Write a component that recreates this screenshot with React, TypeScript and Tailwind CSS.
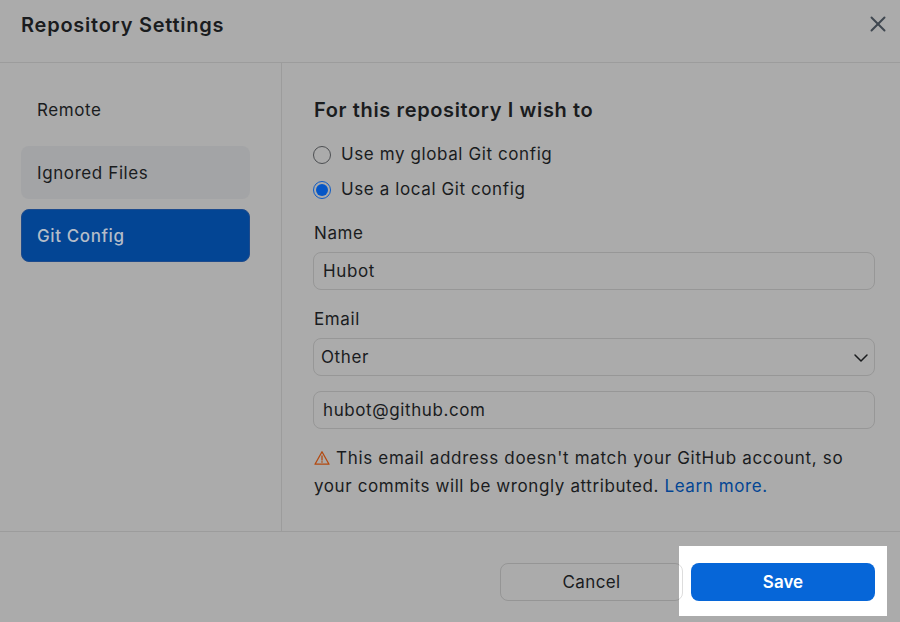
import { ChevronDown, X } from "lucide-react";

const font = "font-['Inter','Liberation_Sans',sans-serif]";

const App = () => {
  return (
    <div className={`${font} w-[900px] h-[622px] overflow-hidden bg-[#ababab] text-[#1a1c1e] flex flex-col`}>
      <header className="h-[63px] shrink-0 border-b border-[#9c9c9c] pl-[21px] pr-[9px] flex items-center justify-between">
        <h1 className="text-[20px] font-semibold leading-none tracking-[0.76px] -mt-[13px]">Repository Settings</h1>
        <button className="-mt-[15px] text-[#3f4750]">
          <X size={26} strokeWidth={1.8} />
        </button>
      </header>

      <div className="flex flex-1 min-h-0">
        <nav className="w-[282px] shrink-0 border-r border-[#9c9c9c] pl-[21px] pr-[31px] pt-[20px] flex flex-col gap-[10px] text-[17px] tracking-[0.6px]">
          <div className="h-[53px] pl-[16px] pt-[3px] flex items-center">Remote</div>
          <div className="h-[53px] pl-[16px] pt-[3px] flex items-center rounded-[8px] bg-[#a3a4a6]">Ignored Files</div>
          <div className="h-[53px] pl-[15px] pt-[2px] flex items-center rounded-[8px] bg-[#034594] border border-[#1e4b8c] text-[#b4bcc8] font-medium">Git Config</div>
        </nav>

        <main className="flex-1 pl-[31px] pr-[25px] pt-[34px] text-[17px] tracking-[0.6px]">
          <h2 className="pl-[1px] text-[20px] font-semibold leading-[26px] tracking-[0.63px]">For this repository I wish to</h2>

          <div className="mt-[20px] flex items-center gap-[10px] h-[24px]">
            <span className="w-[18px] h-[18px] rounded-full border border-[#4d4f52]" />
            <span>Use my global Git config</span>
          </div>
          <div className="mt-[11px] flex items-center gap-[10px] h-[24px]">
            <span className="w-[18px] h-[18px] rounded-full border-[1.5px] border-[#0f5bc4] flex items-center justify-center">
              <span className="w-[12px] h-[12px] rounded-full bg-[#0556c6]" />
            </span>
            <span>Use a local Git config</span>
          </div>

          <div className="mt-[19px] pl-[1px] leading-[24px]">Name</div>
          <div className="mt-[7px] h-[38px] rounded-[8px] border border-[#979797] pl-[9px] pt-[2px] flex items-center">Hubot</div>

          <div className="mt-[17px] pl-[1px] leading-[24px]">Email</div>
          <div className="mt-[7px] h-[38px] rounded-[8px] border border-[#979797] pl-[7px] pr-[1px] pt-[1px] flex items-center justify-between">
            <span>Other</span>
            <ChevronDown size={24} strokeWidth={1.5} className="text-[#1a1c1e]" />
          </div>
          <div className="mt-[15px] h-[38px] rounded-[8px] border border-[#979797] pl-[9px] pt-[2px] flex items-center">hubot@github.com</div>

          <p className="mt-[15px] pl-[1px] leading-[28px]">
            <svg viewBox="0 0 16 16" className="inline-block w-[16px] h-[16px] mr-[6px] -mt-[2px] text-[#b3490f]" fill="none" stroke="currentColor" strokeWidth="1.3" strokeLinejoin="round">
              <path d="M8 1.8 L15 14.2 H1 Z" />
              <path d="M8 6 V10" strokeLinecap="round" />
              <path d="M8 11.7 V12.2" strokeLinecap="round" />
            </svg>
            <span className="tracking-[0.68px]">This email address doesn't match your GitHub account, so</span> your commits will be wrongly attributed.{" "}
            <a className="text-[#034594]">Learn more.</a>
          </p>
        </main>
      </div>

      <footer className="h-[91px] shrink-0 border-t border-[#9c9c9c] pr-[13px] flex justify-end items-start text-[17px]">
        <button className="relative z-10 mt-[31px] w-[183px] h-[38px] pt-[1px] rounded-[8px] border border-[#1a1c1e]/15 tracking-[0.4px]">Cancel</button>
        <div className="-ml-[4px] mt-[14px] bg-white w-[208px] h-[70px] pl-[12px] pr-[12px] pt-[17px]">
          <button className="w-[184px] h-[38px] pt-[1px] rounded-[8px] bg-[#0666d8] text-white font-semibold">Save</button>
        </div>
      </footer>
    </div>
  );
};

export default App;
